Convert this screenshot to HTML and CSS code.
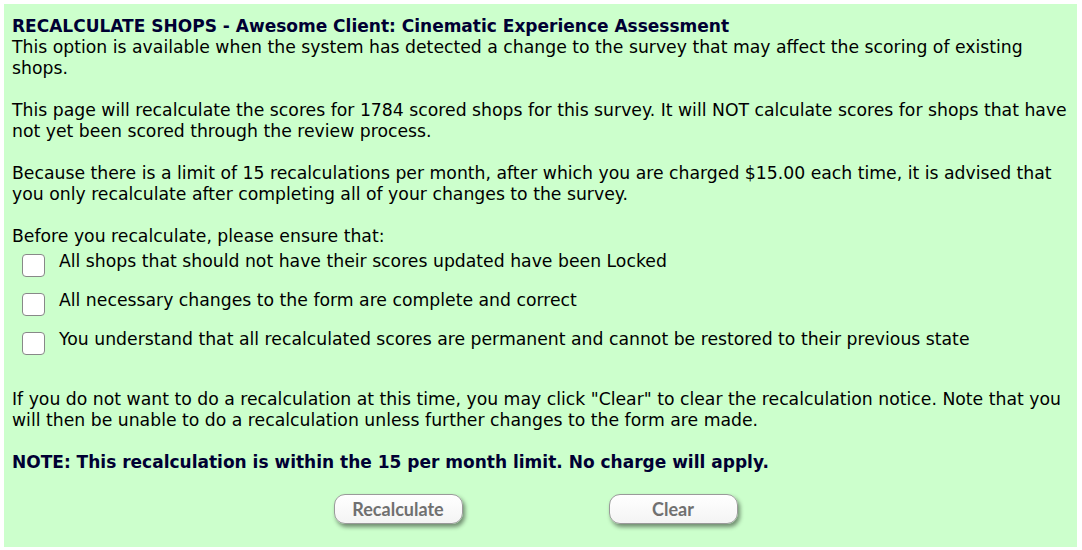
FILE: index.html
```html
<!DOCTYPE html>
<html>
<head>
<meta charset="utf-8">
<link rel="stylesheet" href="styles.css">
</head>
<body>
<div class="panel">
  <h1 class="title">RECALCULATE SHOPS - Awesome Client: Cinematic Experience Assessment</h1>
  <p class="para first">This option is available when the system has detected a change to the survey that may affect the scoring of existing shops.</p>
  <p class="para">This page will recalculate the scores for 1784 scored shops for this survey. It will NOT calculate scores for shops that have not yet been scored through the review process.</p>
  <p class="para">Because there is a limit of 15 recalculations per month, after which you are charged $15.00 each time, it is advised that you only recalculate after completing all of your changes to the survey.</p>
  <p class="para">Before you recalculate, please ensure that:</p>
  <ul class="checks">
    <li class="check"><span class="box"></span><span>All shops that should not have their scores updated have been Locked</span></li>
    <li class="check"><span class="box"></span><span>All necessary changes to the form are complete and correct</span></li>
    <li class="check"><span class="box"></span><span>You understand that all recalculated scores are permanent and cannot be restored to their previous state</span></li>
  </ul>
  <p class="para after">If you do not want to do a recalculation at this time, you may click "Clear" to clear the recalculation notice. Note that you will then be unable to do a recalculation unless further changes to the form are made.</p>
  <p class="para note">NOTE: This recalculation is within the 15 per month limit. No charge will apply.</p>
  <div class="actions">
    <button class="btn">Recalculate</button>
    <button class="btn">Clear</button>
  </div>
</div>
</body>
</html>
```
FILE: styles.css
```css
html, body {
  margin: 0;
  padding: 0;
  background: #ffffff;
}
body {
  padding: 4px 5px 3px 4px;
  font-family: "DejaVu Sans", Verdana, sans-serif;
}
.panel {
  background: #ccffcc;
  height: 543px;
  box-sizing: border-box;
  padding: 11px 8px 0 8px;
  color: #000;
  font-size: 17.25px;
  line-height: 21px;
}
.title {
  margin: 0;
  font-size: 17px;
  line-height: 22px;
  font-weight: bold;
  color: #000033;
}
.para {
  margin: 21px 0 0 0;
}
.para.first {
  margin-top: 0;
}
.para.after {
  margin-top: 21px;
}
.checks {
  list-style: none;
  margin: 4px 0 0 0;
  padding: 0 0 0 10px;
}
.check {
  display: flex;
  align-items: flex-start;
  gap: 14px;
  height: 39px;
}
.box {
  width: 21px;
  height: 21px;
  margin-top: 3px;
  border: 1px solid #888;
  border-radius: 4px;
  background: #fff;
  flex: none;
}
.note {
  margin-top: 21px;
  font-size: 17px;
  font-weight: bold;
  color: #000033;
}
.actions {
  display: flex;
  justify-content: center;
  gap: 146px;
  margin-top: 21px;
  padding-right: 10px;
}
.btn {
  width: 129px;
  height: 30px;
  border: 1px solid #9a9a9a;
  border-radius: 11px;
  background: linear-gradient(#ffffff, #f4f4f4);
  box-shadow: 2px 3px 4px rgba(0,0,0,0.45);
  color: #707070;
  font-family: Lato, "Open Sans", sans-serif;
  font-weight: bold;
  font-size: 18px;
  padding: 0;
}
```
